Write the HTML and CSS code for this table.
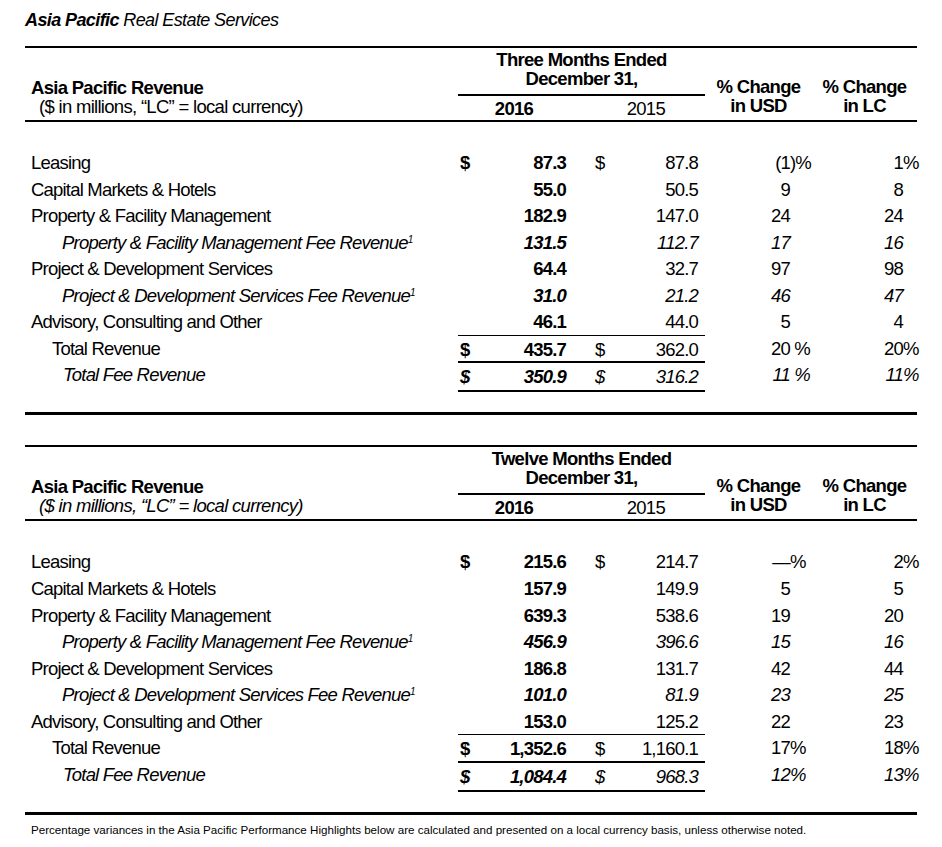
FILE: index.html
```html
<!DOCTYPE html>
<html>
<head>
<meta charset="utf-8">
<link rel="stylesheet" href="styles.css">
</head>
<body>
<div class="page">
  <div class="title"><b>Asia Pacific</b> Real Estate Services</div>

  <section class="block first">
    <div class="head">
      <div class="h-label">
        <div class="h-main">Asia Pacific Revenue</div>
        <div class="h-sub">($ in millions, “LC” = local currency)</div>
      </div>
      <div class="h-period">
        <div class="h-period-title">Three Months Ended<br>December 31,</div>
        <div class="h-years"><span class="y-cur">2016</span><span class="y-prev">2015</span></div>
      </div>
      <div class="h-pct">% Change<br>in USD</div>
      <div class="h-pct">% Change<br>in LC</div>
    </div>
    <div class="body">
      <div class="row"><div class="lbl">Leasing</div><div class="cur"><span class="sym">$</span><span class="num">87.3</span></div><div class="prev"><span class="sym">$</span><span class="num">87.8</span></div><div class="usd"><span class="num">(1</span><span class="sfx">)%</span></div><div class="lc"><span class="num">1</span><span class="sfx">%</span></div></div>
      <div class="row"><div class="lbl">Capital Markets &amp; Hotels</div><div class="cur"><span class="num">55.0</span></div><div class="prev"><span class="num">50.5</span></div><div class="usd"><span class="num">9</span><span class="sfx"></span></div><div class="lc"><span class="num">8</span><span class="sfx"></span></div></div>
      <div class="row"><div class="lbl">Property &amp; Facility Management</div><div class="cur"><span class="num">182.9</span></div><div class="prev"><span class="num">147.0</span></div><div class="usd"><span class="num">24</span><span class="sfx"></span></div><div class="lc"><span class="num">24</span><span class="sfx"></span></div></div>
      <div class="row it"><div class="lbl ind2">Property &amp; Facility Management Fee Revenue<sup>1</sup></div><div class="cur"><span class="num">131.5</span></div><div class="prev"><span class="num">112.7</span></div><div class="usd"><span class="num">17</span><span class="sfx"></span></div><div class="lc"><span class="num">16</span><span class="sfx"></span></div></div>
      <div class="row"><div class="lbl">Project &amp; Development Services</div><div class="cur"><span class="num">64.4</span></div><div class="prev"><span class="num">32.7</span></div><div class="usd"><span class="num">97</span><span class="sfx"></span></div><div class="lc"><span class="num">98</span><span class="sfx"></span></div></div>
      <div class="row it"><div class="lbl ind2">Project &amp; Development Services Fee Revenue<sup>1</sup></div><div class="cur"><span class="num">31.0</span></div><div class="prev"><span class="num">21.2</span></div><div class="usd"><span class="num">46</span><span class="sfx"></span></div><div class="lc"><span class="num">47</span><span class="sfx"></span></div></div>
      <div class="row"><div class="lbl">Advisory, Consulting and Other</div><div class="cur"><span class="num">46.1</span></div><div class="prev"><span class="num">44.0</span></div><div class="usd"><span class="num">5</span><span class="sfx"></span></div><div class="lc"><span class="num">4</span><span class="sfx"></span></div></div>
      <div class="row total"><div class="lbl ind1">Total Revenue</div><div class="cur"><span class="sym">$</span><span class="num">435.7</span></div><div class="prev"><span class="sym">$</span><span class="num">362.0</span></div><div class="usd"><span class="num">20</span><span class="sfx">&nbsp;%</span></div><div class="lc"><span class="num">20</span><span class="sfx">%</span></div></div>
      <div class="row it fee"><div class="lbl ind3">Total Fee Revenue</div><div class="cur"><span class="sym">$</span><span class="num">350.9</span></div><div class="prev"><span class="sym">$</span><span class="num">316.2</span></div><div class="usd"><span class="num">11</span><span class="sfx">&nbsp;%</span></div><div class="lc"><span class="num">11</span><span class="sfx">%</span></div></div>
    </div>
  </section>

  <div class="sep"></div>

  <section class="block second">
    <div class="head">
      <div class="h-label">
        <div class="h-main">Asia Pacific Revenue</div>
        <div class="h-sub h-sub-it">($ in millions, “LC” = local currency)</div>
      </div>
      <div class="h-period">
        <div class="h-period-title">Twelve Months Ended<br>December 31,</div>
        <div class="h-years"><span class="y-cur">2016</span><span class="y-prev">2015</span></div>
      </div>
      <div class="h-pct">% Change<br>in USD</div>
      <div class="h-pct">% Change<br>in LC</div>
    </div>
    <div class="body">
      <div class="row"><div class="lbl">Leasing</div><div class="cur"><span class="sym">$</span><span class="num">215.6</span></div><div class="prev"><span class="sym">$</span><span class="num">214.7</span></div><div class="usd"><span class="num">—</span><span class="sfx">%</span></div><div class="lc"><span class="num">2</span><span class="sfx">%</span></div></div>
      <div class="row"><div class="lbl">Capital Markets &amp; Hotels</div><div class="cur"><span class="num">157.9</span></div><div class="prev"><span class="num">149.9</span></div><div class="usd"><span class="num">5</span><span class="sfx"></span></div><div class="lc"><span class="num">5</span><span class="sfx"></span></div></div>
      <div class="row"><div class="lbl">Property &amp; Facility Management</div><div class="cur"><span class="num">639.3</span></div><div class="prev"><span class="num">538.6</span></div><div class="usd"><span class="num">19</span><span class="sfx"></span></div><div class="lc"><span class="num">20</span><span class="sfx"></span></div></div>
      <div class="row it"><div class="lbl ind2">Property &amp; Facility Management Fee Revenue<sup>1</sup></div><div class="cur"><span class="num">456.9</span></div><div class="prev"><span class="num">396.6</span></div><div class="usd"><span class="num">15</span><span class="sfx"></span></div><div class="lc"><span class="num">16</span><span class="sfx"></span></div></div>
      <div class="row"><div class="lbl">Project &amp; Development Services</div><div class="cur"><span class="num">186.8</span></div><div class="prev"><span class="num">131.7</span></div><div class="usd"><span class="num">42</span><span class="sfx"></span></div><div class="lc"><span class="num">44</span><span class="sfx"></span></div></div>
      <div class="row it"><div class="lbl ind2">Project &amp; Development Services Fee Revenue<sup>1</sup></div><div class="cur"><span class="num">101.0</span></div><div class="prev"><span class="num">81.9</span></div><div class="usd"><span class="num">23</span><span class="sfx"></span></div><div class="lc"><span class="num">25</span><span class="sfx"></span></div></div>
      <div class="row"><div class="lbl">Advisory, Consulting and Other</div><div class="cur"><span class="num">153.0</span></div><div class="prev"><span class="num">125.2</span></div><div class="usd"><span class="num">22</span><span class="sfx"></span></div><div class="lc"><span class="num">23</span><span class="sfx"></span></div></div>
      <div class="row total"><div class="lbl ind1">Total Revenue</div><div class="cur"><span class="sym">$</span><span class="num">1,352.6</span></div><div class="prev"><span class="sym">$</span><span class="num">1,160.1</span></div><div class="usd"><span class="num">17</span><span class="sfx">%</span></div><div class="lc"><span class="num">18</span><span class="sfx">%</span></div></div>
      <div class="row it fee"><div class="lbl ind3">Total Fee Revenue</div><div class="cur"><span class="sym">$</span><span class="num">1,084.4</span></div><div class="prev"><span class="sym">$</span><span class="num">968.3</span></div><div class="usd"><span class="num">12</span><span class="sfx">%</span></div><div class="lc"><span class="num">13</span><span class="sfx">%</span></div></div>
    </div>
  </section>

  <div class="sep sep-bottom"></div>
  <div class="note">Percentage variances in the Asia Pacific Performance Highlights below are calculated and presented on a local currency basis, unless otherwise noted.</div>
</div>
</body>
</html>
```

FILE: styles.css
```css
* { box-sizing: border-box; }
body {
  margin: 0;
  background: #fff;
  color: #000;
  font-family: "Liberation Sans", Arial, sans-serif;
}
.page {
  width: 942px;
  padding: 9px 25px 0 25px;
}
.title {
  font-style: italic;
  font-size: 18px;
  letter-spacing: -0.6px;
  line-height: 22px;
  height: 37px;
}
.block {
  border-top: 2px solid #000;
}
.head {
  display: grid;
  grid-template-columns: 433px 247px 107px 105px;
  height: 74px;
  border-bottom: 2px solid #000;
  font-size: 18.5px;
  letter-spacing: -0.7px;
  line-height: 19px;
}
.h-label {
  align-self: end;
  padding: 0 0 4px 6px;
}
.h-main { font-weight: bold; }
.h-sub { padding-left: 8px; }
.h-sub-it { font-style: italic; }
.h-period {
  display: flex;
  flex-direction: column;
  justify-content: flex-end;
}
.h-period-title {
  font-weight: bold;
  text-align: center;
  padding-bottom: 6px;
  border-bottom: 2px solid #000;
}
.h-years {
  display: grid;
  grid-template-columns: 132px 115px;
  padding: 3px 0 2px;
}
.y-cur { font-weight: bold; text-align: center; padding-right: 20px; }
.y-prev { text-align: right; padding-right: 40px; }
.h-pct {
  align-self: end;
  font-weight: bold;
  text-align: center;
  padding-bottom: 5px;
}
.body {
  padding-top: 27px;
  font-size: 18.5px;
  letter-spacing: -0.8px;
}
.row {
  display: grid;
  grid-template-columns: 433px 132px 115px 107px 105px;
  height: 26.55px;
  line-height: 27px;
}
.lbl { padding-left: 6px; white-space: nowrap; }
.ind1 { padding-left: 27px; }
.ind2 { padding-left: 37px; }
.ind3 { padding-left: 38px; }
.it { font-style: italic; }
sup { font-size: 10px; line-height: 0; vertical-align: 6px; }
.cur, .prev { display: flex; }
.num { margin-left: auto; }
.cur { font-weight: bold; padding: 0 24px 0 2px; }
.prev { padding: 0 7px 0 5px; }
.usd, .lc { display: flex; justify-content: flex-end; }
.usd { padding-right: 2px; }
.lc { padding-right: 0; }
.usd .sfx { width: 20px; }
.lc .sfx { width: 14px; }
.total .cur, .total .prev { border-top: 1px solid #000; }
.fee .cur, .fee .prev { border-top: 2px solid #000; border-bottom: 2px solid #000; }
.sep {
  height: 3px;
  background: #000;
  margin: 24.5px 0 30px;
}
.sep-bottom { margin: 24.5px 0 8px; }
.note {
  font-size: 11.6px;
  padding-left: 6px;
}
```
